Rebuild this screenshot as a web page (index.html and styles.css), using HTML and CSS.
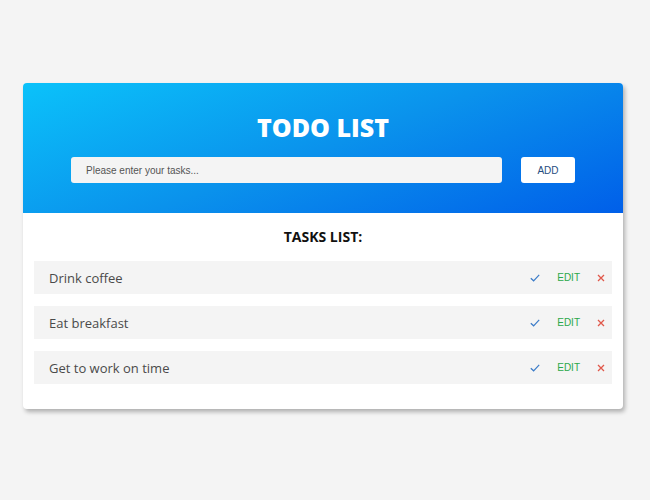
FILE: index.html
```
<!DOCTYPE html>
<html>
<head>
<meta charset="utf-8">
<link rel="stylesheet" href="styles.css">
</head>
<body>
<div class="card">
  <div class="header">
    <h1 class="title">TODO LIST</h1>
    <div class="form">
      <input class="task-input" type="text" placeholder="Please enter your tasks...">
      <button class="add-btn">ADD</button>
    </div>
  </div>
  <div class="content">
    <h2 class="list-title">TASKS LIST:</h2>
    <ul class="tasks">
      <li class="task"><span class="task-text">Drink coffee</span><span class="actions"><svg class="done" width="10" height="8" viewBox="0 0 10 8"><path d="M0.8 4.2 L3.6 6.8 L9.2 0.8" fill="none" stroke="#3a7bc8" stroke-width="1.2"/></svg><span class="edit">EDIT</span><svg class="del" width="8" height="8" viewBox="0 0 8 8"><path d="M1 1 L7 7 M7 1 L1 7" stroke="#e0584a" stroke-width="1.3"/></svg></span></li>
      <li class="task"><span class="task-text">Eat breakfast</span><span class="actions"><svg class="done" width="10" height="8" viewBox="0 0 10 8"><path d="M0.8 4.2 L3.6 6.8 L9.2 0.8" fill="none" stroke="#3a7bc8" stroke-width="1.2"/></svg><span class="edit">EDIT</span><svg class="del" width="8" height="8" viewBox="0 0 8 8"><path d="M1 1 L7 7 M7 1 L1 7" stroke="#e0584a" stroke-width="1.3"/></svg></span></li>
      <li class="task"><span class="task-text">Get to work on time</span><span class="actions"><svg class="done" width="10" height="8" viewBox="0 0 10 8"><path d="M0.8 4.2 L3.6 6.8 L9.2 0.8" fill="none" stroke="#3a7bc8" stroke-width="1.2"/></svg><span class="edit">EDIT</span><svg class="del" width="8" height="8" viewBox="0 0 8 8"><path d="M1 1 L7 7 M7 1 L1 7" stroke="#e0584a" stroke-width="1.3"/></svg></span></li>
    </ul>
  </div>
</div>
</body>
</html>
```
FILE: styles.css
```
* { box-sizing: border-box; }
html, body { margin: 0; padding: 0; }
body {
  background: #f4f4f4;
  font-family: "Open Sans", "Liberation Sans", sans-serif;
  padding-top: 83px;
  height: 500px;
}
.card {
  width: 600px;
  margin-left: 23px;
  background: #fff;
  border-radius: 4px;
  overflow: hidden;
  box-shadow: 2px 3px 4px rgba(0,0,0,0.28);
}
.header {
  background: linear-gradient(160deg, #0bc2fa 0%, #0a92ec 50%, #005fe9 100%);
  height: 130px;
  padding: 29px 48px 0;
}
.title {
  margin: 0;
  text-align: center;
  color: #fff;
  font-family: "Open Sans", sans-serif;
  font-weight: 800;
  font-size: 25px;
  line-height: 30px;
}
.form {
  display: flex;
  justify-content: space-between;
  margin-top: 15px;
}
.task-input {
  width: 431px;
  height: 26px;
  border: none;
  border-radius: 3px;
  background: #f4f4f4;
  padding: 0 15px;
  font-family: "Liberation Sans", Arial, sans-serif;
  font-size: 10px;
  color: #333;
  outline: none;
}
.task-input::placeholder { color: #555; }
.add-btn {
  width: 54px;
  height: 26px;
  border: none;
  border-radius: 3px;
  background: #fff;
  font-family: "Liberation Sans", Arial, sans-serif;
  font-size: 10px;
  color: #254d80;
  padding: 0;
}
.content {
  padding: 15px 11px 25px;
}
.list-title {
  margin: 0;
  text-align: center;
  font-family: "Open Sans", sans-serif;
  font-weight: 700;
  font-size: 14px;
  line-height: 18px;
  color: #111;
}
.tasks {
  list-style: none;
  margin: 15px 0 0;
  padding: 0;
  display: flex;
  flex-direction: column;
  gap: 12px;
}
.task {
  display: flex;
  align-items: center;
  justify-content: space-between;
  height: 33px;
  background: #f4f4f4;
  padding: 0 7px 0 15px;
}
.task-text {
  font-family: "Open Sans", sans-serif;
  font-size: 13px;
  color: #4a4a4a;
}
.actions {
  display: flex;
  align-items: center;
  font-family: "Liberation Sans", Arial, sans-serif;
  font-size: 10px;
}
.done { display: block; }
.edit { color: #2aa84a; margin-left: 17px; }
.del { display: block; margin-left: 17px; }
```
